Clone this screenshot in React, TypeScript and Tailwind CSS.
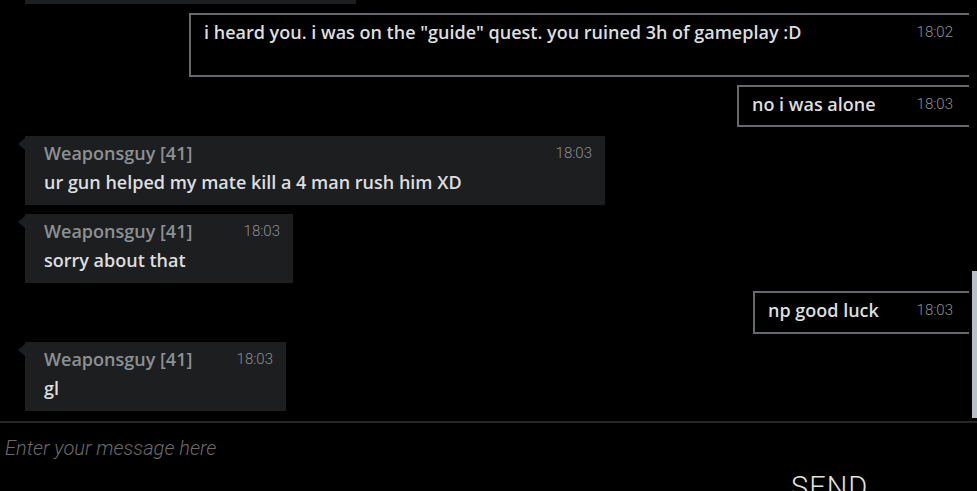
import React from "react";

const msgFont = "[font-family:'Open_Sans',sans-serif]";

function Time({ t }: { t: string }) {
  return (
    <span className="[font-family:Roboto,sans-serif] font-light text-[15px] leading-[24px] text-[#8d9194]">
      {t}
    </span>
  );
}

function Mine({ text, t, w, h }: { text: string; t: string; w: string; h: string }) {
  return (
    <div className={`self-end mr-[8px] ${w} ${h} border-l-2 border-t-2 border-b-2 border-[#66696c] pl-[13px] pr-[16px] pt-[5px] flex justify-between items-start`}>
      <span className={`${msgFont} font-semibold text-[18px] leading-[24px] text-[#dcdedf]`}>{text}</span>
      <Time t={t} />
    </div>
  );
}

function Theirs({ text, t, w }: { text: string; t: string; w: string }) {
  return (
    <div className={`relative ml-[25px] ${w} h-[69px] bg-[#1d1e1f] pl-[19px] pr-[13px] pt-[5px]`}>
      <div className="absolute left-[-7px] top-[2px] w-0 h-0 border-y-[6px] border-y-transparent border-r-[7px] border-r-[#1d1e1f]" />
      <div className="flex justify-between items-start">
        <span className={`${msgFont} font-semibold text-[18px] leading-[24px] text-[#8c9194]`}>Weaponsguy [41]</span>
        <Time t={t} />
      </div>
      <div className={`${msgFont} font-semibold text-[18px] leading-[24px] mt-[5px] text-[#dcdedf]`}>{text}</div>
    </div>
  );
}

export default function App() {
  return (
    <div className="relative w-[977px] h-[491px] bg-black overflow-hidden flex flex-col">
      <div className="h-[421px] shrink-0 flex flex-col">
        <div className="ml-[25px] w-[331px] h-[4px] shrink-0 bg-[#1d1e1f]" />
        <div className="mt-[9px] self-end shrink-0">
          <Mine
            text={'i heard you. i was on the "guide" quest. you ruined 3h of gameplay :D'}
            t="18:02"
            w="w-[780px]"
            h="h-[64px]"
          />
        </div>
        <div className="mt-[8px] self-end shrink-0">
          <Mine text="no i was alone" t="18:03" w="w-[232px]" h="h-[42px]" />
        </div>
        <div className="mt-[9px] shrink-0">
          <Theirs text="ur gun helped my mate kill a 4 man rush him XD" t="18:03" w="w-[580px]" />
        </div>
        <div className="mt-[9px] shrink-0">
          <Theirs text="sorry about that" t="18:03" w="w-[268px]" />
        </div>
        <div className="mt-[8px] self-end shrink-0">
          <Mine text="np good luck" t="18:03" w="w-[216px]" h="h-[43px]" />
        </div>
        <div className="mt-[8px] shrink-0">
          <Theirs text="gl" t="18:03" w="w-[261px]" />
        </div>
      </div>
      <div className="h-[2px] shrink-0 bg-[#262626]" />
      <div className="shrink-0 flex flex-col">
        <div className="pl-[5px] pt-[12px] [font-family:Roboto,sans-serif] italic font-light text-[20px] leading-[26px] text-[#6a6a6a]">
          Enter your message here
        </div>
        <div className="pl-[791px] pt-[10px] [font-family:Roboto,sans-serif] font-light text-[29px] leading-[32px] text-[#e2e2da] tracking-[1px]">
          SEND
        </div>
      </div>
      <div className="absolute right-0 top-[271px] w-[5px] h-[147px] bg-[#b8c0c7]" />
    </div>
  );
}
